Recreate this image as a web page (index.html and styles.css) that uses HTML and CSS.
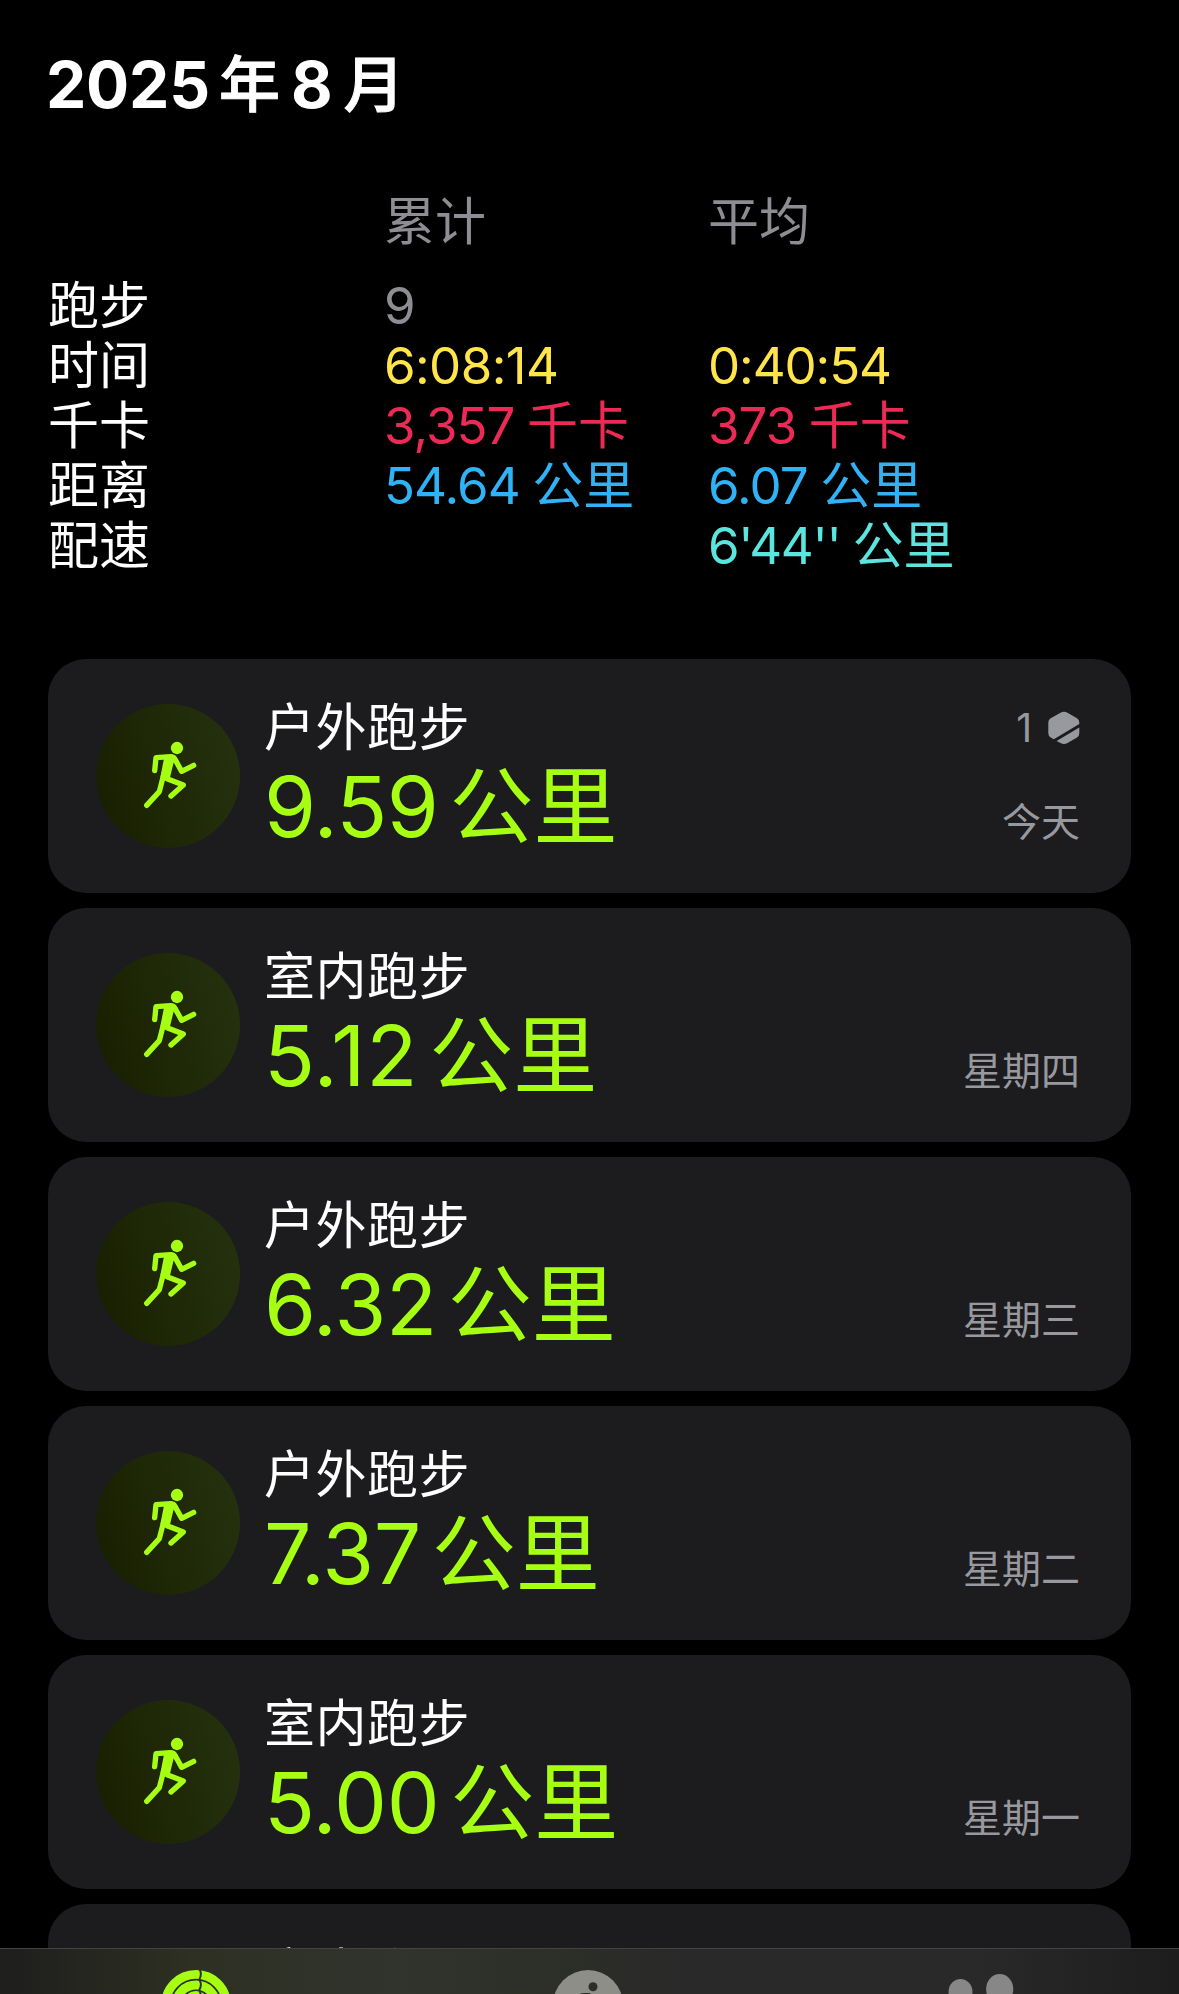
FILE: index.html
```
<!DOCTYPE html>
<html lang="zh-CN">
<head>
<meta charset="utf-8">
<title>2025年8月</title>
<link rel="stylesheet" href="styles.css">
</head>
<body>

<svg class="defs" width="0" height="0">
  <symbol id="runner" viewBox="-102 -48 432 432">
    <circle cx="141" cy="84" r="18.5"/>
    <path class="torso" d="M104 105 L124 104 L136 112 L113 178 L91 172 Z"/>
    <path class="limb" d="M74 152 L78 113 L122 110 Q131 110 135 118 L155 154 L191 136"/>
    <path class="limb" d="M115 117 L98 176 L88 215 L50 256"/>
    <path class="limb" d="M125 117 L111 176 L160 195 L123 228"/>
  </symbol>
  <symbol id="award" viewBox="0 0 32 34">
    <path d="M12.500 1.800 Q16 -.2 19.500 1.800 L29 7.200 Q31.300 8.700 31.300 11.500 V12.900 L5.800 28.300 L2.700 26.500 Q.3 25 .3 22.200 V11.500 Q.3 8.700 2.700 7.200 Z"/>
    <path d="M31.300 16.500 V22.200 Q31.300 25 29 26.500 L19.500 31.900 Q16 33.900 12.500 31.900 L8.600 29.900 Z"/>
  </symbol>
</svg>

<div class="screen">
  <h1><span class="year">2025</span><em>年</em><span>8</span><em>月</em></h1>

  <div class="summary">
    <div class="row head"><span></span><em>累计</em><em>平均</em></div>
    <div class="row count"><b>跑步</b><span>9</span><span></span></div>
    <div class="row time"><b>时间</b><span>6:08:14</span><span class="average">0:40:54</span></div>
    <div class="row energy"><b>千卡</b><span>3,357 <em>千卡</em></span><span>373 <em>千卡</em></span></div>
    <div class="row distance"><b>距离</b><span>54.64 <em>公里</em></span><span>6.07 <em>公里</em></span></div>
    <div class="row pace"><b>配速</b><span></span><span>6'44'' <em>公里</em></span></div>
  </div>

  <div class="list">
    <div class="card">
      <svg class="icon"><use href="#runner"/></svg>
      <div class="info">
        <div class="name">户外跑步</div>
        <div class="value"><span class="num">9.59</span><em>公里</em></div>
      </div>
      <div class="meta">
        <div class="badge">1<svg><use href="#award"/></svg></div>
        <div class="date">今天</div>
      </div>
    </div>
    <div class="card">
      <svg class="icon"><use href="#runner"/></svg>
      <div class="info">
        <div class="name">室内跑步</div>
        <div class="value"><span class="num wide">5.12</span><em>公里</em></div>
      </div>
      <div class="meta"><div class="date">星期四</div></div>
    </div>
    <div class="card">
      <svg class="icon"><use href="#runner"/></svg>
      <div class="info">
        <div class="name">户外跑步</div>
        <div class="value"><span class="num">6.32</span><em>公里</em></div>
      </div>
      <div class="meta"><div class="date">星期三</div></div>
    </div>
    <div class="card">
      <svg class="icon"><use href="#runner"/></svg>
      <div class="info">
        <div class="name">户外跑步</div>
        <div class="value"><span class="num">7.37</span><em>公里</em></div>
      </div>
      <div class="meta"><div class="date">星期二</div></div>
    </div>
    <div class="card">
      <svg class="icon"><use href="#runner"/></svg>
      <div class="info">
        <div class="name">室内跑步</div>
        <div class="value"><span class="num">5.00</span><em>公里</em></div>
      </div>
      <div class="meta"><div class="date">星期一</div></div>
    </div>
    <div class="card">
      <svg class="icon"><use href="#runner"/></svg>
      <div class="info">
        <div class="name">室内跑步</div>
      </div>
    </div>
  </div>
</div>

<div class="tabbar">
  <svg class="tab rings" viewBox="0 0 70 70">
    <circle cx="35" cy="35" r="30.600"/>
    <circle cx="35" cy="35" r="20"/>
    <circle cx="35" cy="35" r="9.500"/>
    <path d="M38.500 -1 Q41.500 4.500 38 10 M38.500 10 Q41.500 15 38 20.500 M38.500 21 Q41.500 26 38 31"/>
  </svg>
  <svg class="tab fitness" viewBox="0 0 70 70">
    <circle cx="35" cy="35" r="35"/>
    <circle class="cut" cx="40" cy="16.800" r="4.500"/>
    <path class="cut" d="M24 27 Q26 23 31 23 L37 23 L40 27 Z"/>
  </svg>
  <svg class="tab sharing" viewBox="0 0 70 70">
    <ellipse cx="14.500" cy="22" rx="12" ry="13"/>
    <ellipse cx="53.700" cy="19" rx="13.600" ry="15"/>
  </svg>
</div>

</body>
</html>
```
FILE: styles.css
```
body {
  margin: 0;
  height: 1994px;
  position: relative;
  overflow: hidden;
  background: #000;
  color: #fff;
  font-family: Inter, "Noto Sans CJK SC", sans-serif;
  font-weight: 370;
}

em {
  font-style: normal;
  letter-spacing: 0;
}

.defs {
  position: absolute;
}

.screen {
  height: 1994px;
  padding: 0 48px;
  overflow: hidden;
}

h1 {
  display: flex;
  gap: 11px;
  margin: 0 0 0 -2px;
  padding-top: 40px;
  height: 90px;
  line-height: 90px;
  font-size: 64px;
  font-weight: 700;
}

h1 em {
  font-size: 61px;
  font-weight: 500;
  -webkit-text-stroke: 1px #fff;
}

h1 .year {
  margin-right: -2px;
  letter-spacing: -.2px;
}

.summary {
  padding-top: 62px;
  font-size: 51px;
  letter-spacing: -.9px;
  word-spacing: -1px;
}

.row {
  display: grid;
  grid-template-columns: 336px 324px auto;
  height: 60px;
  line-height: 60px;
  white-space: nowrap;
}

.row b {
  font-weight: inherit;
  letter-spacing: 0;
  color: #fff;
}

.head {
  height: 84px;
}

.head, .count {
  color: #8e8d93;
}

.time {
  color: #ffe54a;
  letter-spacing: -.6px;
}

.time .average {
  letter-spacing: -1.1px;
}

.energy {
  color: #ec2a55;
}

.distance {
  color: #2fb2f6;
}

.pace {
  color: #5ae6de;
  letter-spacing: -1.3px;
}

.list {
  display: flex;
  flex-direction: column;
  gap: 15px;
  padding-top: 83px;
}

.card {
  display: flex;
  flex: none;
  box-sizing: border-box;
  height: 234px;
  padding: 45px 51px 0 48px;
  border-radius: 38px;
  background: #1c1c1e;
}

.icon {
  flex: none;
  width: 144px;
  height: 144px;
  border-radius: 50%;
  background: linear-gradient(75deg, #181e00, #26330f);
  fill: #a6ff12;
}

.limb {
  fill: none;
  stroke: #a6ff12;
  stroke-width: 16px;
  stroke-linecap: round;
  stroke-linejoin: round;
}

.info {
  flex: 1;
  padding-left: 24px;
}

.name {
  height: 53px;
  line-height: 47px;
  font-size: 51px;
  letter-spacing: .5px;
}

.value {
  display: flex;
  gap: 11px;
  height: 100px;
  line-height: 100px;
  font-size: 84px;
  font-weight: 400;
  color: #a6ff12;
}

.num {
  letter-spacing: -.4px;
}

.wide {
  letter-spacing: .8px;
}

.meta {
  display: flex;
  flex-direction: column;
  justify-content: flex-end;
  height: 143px;
  color: #98989f;
  font-size: 39px;
}

.badge {
  display: flex;
  align-items: center;
  justify-content: flex-end;
  gap: 16px;
  height: 50px;
}

.badge svg {
  width: 32px;
  height: 34px;
  fill: #98989f;
}

.date {
  height: 50px;
  margin-top: 46px;
  line-height: 50px;
  text-align: right;
}

.tabbar {
  position: absolute;
  left: 0;
  right: 0;
  bottom: 0;
  display: grid;
  grid-template-columns: 391px 393px 393px;
  justify-items: center;
  box-sizing: border-box;
  height: 46px;
  padding-top: 21px;
  overflow: hidden;
  border-top: 1px solid #434345;
  background: linear-gradient(90deg, #1e1e1d 0, #2d3022 190px, #31342d 400px, #2d3027 520px, #292929 690px, #292929 980px, #1d1d1d 1179px);
}

.tab {
  width: 70px;
  height: 70px;
}

.rings circle {
  fill: none;
  stroke: #a6ff12;
  stroke-width: 8.800px;
}

.rings path {
  fill: none;
  stroke: #2d3022;
  stroke-width: 2px;
}

.fitness {
  fill: #8c8e87;
}

.fitness .cut {
  fill: #2c2f28;
}

.sharing {
  fill: #878787;
}
```
